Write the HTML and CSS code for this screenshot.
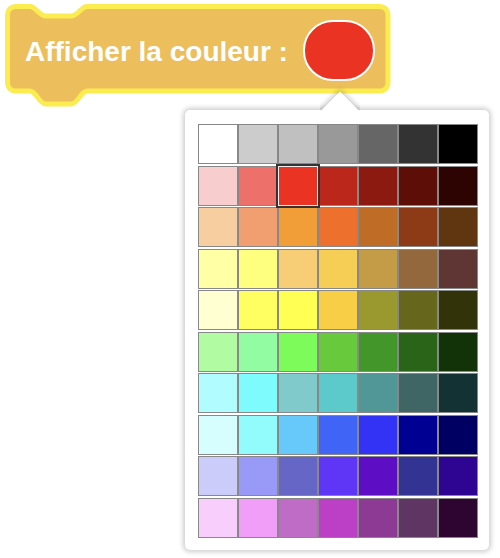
FILE: index.html
```html
<!DOCTYPE html>
<html lang="fr">
<head>
<meta charset="utf-8">
<title>Afficher la couleur</title>
<link rel="stylesheet" href="styles.css">
</head>
<body>
<div class="stage">
  <div class="block">
    <svg class="block-shape" width="396" height="112" viewBox="0 0 396 112" aria-hidden="true">
      <path d="M7.5 14.5 A8 8 0 0 1 15.5 6.5 L30 6.5 C36 6.5 39 16 46 16 L71 16 C78 16 81 6.5 87 6.5 L380 6.5 A8 8 0 0 1 388 14.5 L388 83 A8 8 0 0 1 380 91 L87 91 C81 91 78 104 71 104 L46 104 C39 104 36 91 30 91 L15.5 91 A8 8 0 0 1 7.5 83 Z"/>
    </svg>
    <div class="block-row">
      <span class="block-label">Afficher la couleur :</span>
      <span class="colour-field"></span>
    </div>
  </div>

  <div class="dropdown">
    <div class="arrow-wrap"><div class="arrow"></div></div>
    <div class="palette">
      <div class="swatch" style="background:#ffffff"></div>
      <div class="swatch" style="background:#cccccc"></div>
      <div class="swatch" style="background:#c0c0c0"></div>
      <div class="swatch" style="background:#999999"></div>
      <div class="swatch" style="background:#666666"></div>
      <div class="swatch" style="background:#333333"></div>
      <div class="swatch" style="background:#000000"></div>

      <div class="swatch" style="background:#f7cecd"></div>
      <div class="swatch" style="background:#ed706b"></div>
      <div class="swatch swatch-selected" style="background:#ea3323"></div>
      <div class="swatch" style="background:#bb271a"></div>
      <div class="swatch" style="background:#8c1a11"></div>
      <div class="swatch" style="background:#5d0e07"></div>
      <div class="swatch" style="background:#2e0402"></div>

      <div class="swatch" style="background:#f7cea0"></div>
      <div class="swatch" style="background:#f19e70"></div>
      <div class="swatch" style="background:#f19e38"></div>
      <div class="swatch" style="background:#ed702d"></div>
      <div class="swatch" style="background:#bf6c27"></div>
      <div class="swatch" style="background:#8d3a16"></div>
      <div class="swatch" style="background:#5f360f"></div>

      <div class="swatch" style="background:#ffffa6"></div>
      <div class="swatch" style="background:#ffff7f"></div>
      <div class="swatch" style="background:#f7ce76"></div>
      <div class="swatch" style="background:#f7ce55"></div>
      <div class="swatch" style="background:#c49b47"></div>
      <div class="swatch" style="background:#92683c"></div>
      <div class="swatch" style="background:#5f3634"></div>

      <div class="swatch" style="background:#ffffd1"></div>
      <div class="swatch" style="background:#ffff61"></div>
      <div class="swatch" style="background:#ffff54"></div>
      <div class="swatch" style="background:#f7ce46"></div>
      <div class="swatch" style="background:#99992f"></div>
      <div class="swatch" style="background:#66661c"></div>
      <div class="swatch" style="background:#33330a"></div>

      <div class="swatch" style="background:#b1fca3"></div>
      <div class="swatch" style="background:#92fca3"></div>
      <div class="swatch" style="background:#7dfb5a"></div>
      <div class="swatch" style="background:#67c93b"></div>
      <div class="swatch" style="background:#43972a"></div>
      <div class="swatch" style="background:#2a6419"></div>
      <div class="swatch" style="background:#123208"></div>

      <div class="swatch" style="background:#b1fcfe"></div>
      <div class="swatch" style="background:#7dfbfd"></div>
      <div class="swatch" style="background:#80cacb"></div>
      <div class="swatch" style="background:#5cc9ca"></div>
      <div class="swatch" style="background:#529798"></div>
      <div class="swatch" style="background:#406565"></div>
      <div class="swatch" style="background:#123233"></div>

      <div class="swatch" style="background:#d6fefe"></div>
      <div class="swatch" style="background:#92fcfd"></div>
      <div class="swatch" style="background:#67c9fa"></div>
      <div class="swatch" style="background:#4065f6"></div>
      <div class="swatch" style="background:#3333f5"></div>
      <div class="swatch" style="background:#000093"></div>
      <div class="swatch" style="background:#000062"></div>

      <div class="swatch" style="background:#ccccfb"></div>
      <div class="swatch" style="background:#9999f8"></div>
      <div class="swatch" style="background:#6666c6"></div>
      <div class="swatch" style="background:#5f36f5"></div>
      <div class="swatch" style="background:#5d0ec4"></div>
      <div class="swatch" style="background:#333393"></div>
      <div class="swatch" style="background:#2e0493"></div>

      <div class="swatch" style="background:#f7cefc"></div>
      <div class="swatch" style="background:#f19ef9"></div>
      <div class="swatch" style="background:#bf6cc7"></div>
      <div class="swatch" style="background:#bc40c6"></div>
      <div class="swatch" style="background:#8d3a94"></div>
      <div class="swatch" style="background:#5f3663"></div>
      <div class="swatch" style="background:#2e0431"></div>
    </div>
  </div>
</div>
</body>
</html>
```

FILE: styles.css
```css
html, body {
  margin: 0;
  padding: 0;
  background: #ffffff;
}

.stage {
  position: relative;
  width: 500px;
  height: 558px;
  overflow: hidden;
  font-family: "Liberation Sans", Arial, Helvetica, sans-serif;
}

/* ---- Blockly block (free canvas item) ---- */
.block {
  position: absolute;
  left: 0;
  top: 0;
  width: 396px;
  height: 112px;
}

.block-shape {
  position: absolute;
  left: 0;
  top: 0;
}

.block-shape path {
  fill: #ecbe5c;
  stroke: #fbec50;
  stroke-width: 5;
  stroke-linejoin: round;
}

.block-row {
  position: relative;
  display: flex;
  align-items: center;
  gap: 15px;
  height: 61px;
  padding: 20px 0 0 25px;
}

.block-label {
  color: #ffffff;
  font-weight: bold;
  font-size: 28px;
  line-height: 32px;
  margin-top: 2px;
  white-space: nowrap;
}

.colour-field {
  display: block;
  width: 72px;
  height: 61px;
  box-sizing: border-box;
  border: 2px solid #ffffff;
  border-radius: 30px;
  background: #ea3323;
}

/* ---- Dropdown colour picker (overlay) ---- */
.dropdown {
  position: absolute;
  left: 185px;
  top: 110px;
  z-index: 1;
  padding: 14px 10.5px 12.5px 13px;
  background: #ffffff;
  border-radius: 5px;
  box-shadow: 0 0 5px 2px rgba(0, 0, 0, 0.2);
}

.arrow-wrap {
  position: absolute;
  left: 135px;
  top: -25px;
  width: 40px;
  height: 25px;
  overflow: hidden;
}

.arrow {
  position: absolute;
  left: 7px;
  top: 12px;
  width: 26px;
  height: 26px;
  background: #ffffff;
  transform: rotate(45deg);
  box-shadow: 0 0 5px 2px rgba(0, 0, 0, 0.2);
}

.palette {
  display: grid;
  grid-template-columns: repeat(7, 40px);
  grid-auto-rows: 40px;
  row-gap: 1.5px;
  column-gap: 0;
}

.swatch {
  box-sizing: border-box;
  border: 1px solid #888888;
}

.swatch-selected {
  position: relative;
  border-color: #eeeeee;
  outline: 2px solid #333333;
}
```
